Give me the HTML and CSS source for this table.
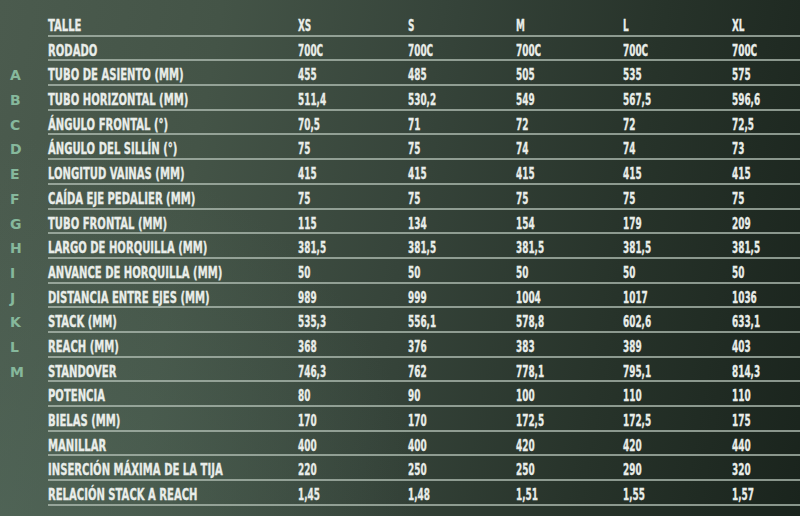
FILE: index.html
```html
<!DOCTYPE html>
<html lang="es">
<head>
<meta charset="utf-8">
<link rel="stylesheet" href="styles.css">
</head>
<body>
<div class="table">
  <div class="row head"><span class="key"></span><div class="cells"><span>TALLE</span><span>XS</span><span>S</span><span>M</span><span>L</span><span>XL</span></div></div>
  <div class="row"><span class="key"></span><div class="cells"><span>RODADO</span><span>700C</span><span>700C</span><span>700C</span><span>700C</span><span>700C</span></div></div>
  <div class="row"><span class="key">A</span><div class="cells"><span>TUBO DE ASIENTO (MM)</span><span>455</span><span>485</span><span>505</span><span>535</span><span>575</span></div></div>
  <div class="row"><span class="key">B</span><div class="cells"><span>TUBO HORIZONTAL (MM)</span><span>511,4</span><span>530,2</span><span>549</span><span>567,5</span><span>596,6</span></div></div>
  <div class="row"><span class="key">C</span><div class="cells"><span>ÁNGULO FRONTAL (°)</span><span>70,5</span><span>71</span><span>72</span><span>72</span><span>72,5</span></div></div>
  <div class="row"><span class="key">D</span><div class="cells"><span>ÁNGULO DEL SILLÍN (°)</span><span>75</span><span>75</span><span>74</span><span>74</span><span>73</span></div></div>
  <div class="row"><span class="key">E</span><div class="cells"><span>LONGITUD VAINAS (MM)</span><span>415</span><span>415</span><span>415</span><span>415</span><span>415</span></div></div>
  <div class="row"><span class="key">F</span><div class="cells"><span>CAÍDA EJE PEDALIER (MM)</span><span>75</span><span>75</span><span>75</span><span>75</span><span>75</span></div></div>
  <div class="row"><span class="key">G</span><div class="cells"><span>TUBO FRONTAL (MM)</span><span>115</span><span>134</span><span>154</span><span>179</span><span>209</span></div></div>
  <div class="row"><span class="key">H</span><div class="cells"><span>LARGO DE HORQUILLA (MM)</span><span>381,5</span><span>381,5</span><span>381,5</span><span>381,5</span><span>381,5</span></div></div>
  <div class="row"><span class="key">I</span><div class="cells"><span>ANVANCE DE HORQUILLA (MM)</span><span>50</span><span>50</span><span>50</span><span>50</span><span>50</span></div></div>
  <div class="row"><span class="key">J</span><div class="cells"><span>DISTANCIA ENTRE EJES (MM)</span><span>989</span><span>999</span><span>1004</span><span>1017</span><span>1036</span></div></div>
  <div class="row"><span class="key">K</span><div class="cells"><span>STACK (MM)</span><span>535,3</span><span>556,1</span><span>578,8</span><span>602,6</span><span>633,1</span></div></div>
  <div class="row"><span class="key">L</span><div class="cells"><span>REACH (MM)</span><span>368</span><span>376</span><span>383</span><span>389</span><span>403</span></div></div>
  <div class="row"><span class="key">M</span><div class="cells"><span>STANDOVER</span><span>746,3</span><span>762</span><span>778,1</span><span>795,1</span><span>814,3</span></div></div>
  <div class="row"><span class="key"></span><div class="cells"><span>POTENCIA</span><span>80</span><span>90</span><span>100</span><span>110</span><span>110</span></div></div>
  <div class="row"><span class="key"></span><div class="cells"><span>BIELAS (MM)</span><span>170</span><span>170</span><span>172,5</span><span>172,5</span><span>175</span></div></div>
  <div class="row"><span class="key"></span><div class="cells"><span>MANILLAR</span><span>400</span><span>400</span><span>420</span><span>420</span><span>440</span></div></div>
  <div class="row"><span class="key"></span><div class="cells"><span>INSERCIÓN MÁXIMA DE LA TIJA</span><span>220</span><span>250</span><span>250</span><span>290</span><span>320</span></div></div>
  <div class="row"><span class="key"></span><div class="cells"><span>RELACIÓN STACK A REACH</span><span>1,45</span><span>1,48</span><span>1,51</span><span>1,55</span><span>1,57</span></div></div>
</div>
</body>
</html>
```
FILE: styles.css
```css
html, body {
  margin: 0;
  padding: 0;
  width: 800px;
  height: 516px;
  overflow: hidden;
}
body {
  background:
    radial-gradient(ellipse 420px 380px at 0% 100%, rgba(86,110,96,0.5), rgba(86,110,96,0) 100%),
    linear-gradient(100deg, #4b5b4e 0%, #445447 25%, #36443a 50%, #27332a 75%, #1a241d 100%);
  font-family: "DejaVu Sans Condensed", "DejaVu Sans", sans-serif;
  font-weight: bold;
  color: #e9ede9;
}
.table {
  padding-top: 12px;
}
.row {
  display: flex;
  height: 24.7px;
}
.key {
  width: 48px;
  flex: none;
  box-sizing: border-box;
  padding-left: 10px;
  padding-top: 3px;
  color: #86b89c;
  font-family: "DejaVu Sans", sans-serif;
  font-size: 14px;
  line-height: 22px;
}
.cells {
  flex: 1;
  display: grid;
  grid-template-columns: 250px 110px 108px 107px 109px 1fr;
  align-items: center;
  box-sizing: border-box;
  padding-top: 5px;
  border-bottom: 2px solid rgba(175,188,178,0.75);
  font-size: 15px;
  -webkit-text-stroke: 0.3px #e9ede9;
}
.cells span {
  display: inline-block;
  white-space: nowrap;
  transform: scaleX(0.745);
  transform-origin: left center;
}
.cells span + span {
  transform: scaleX(0.66);
}
```
